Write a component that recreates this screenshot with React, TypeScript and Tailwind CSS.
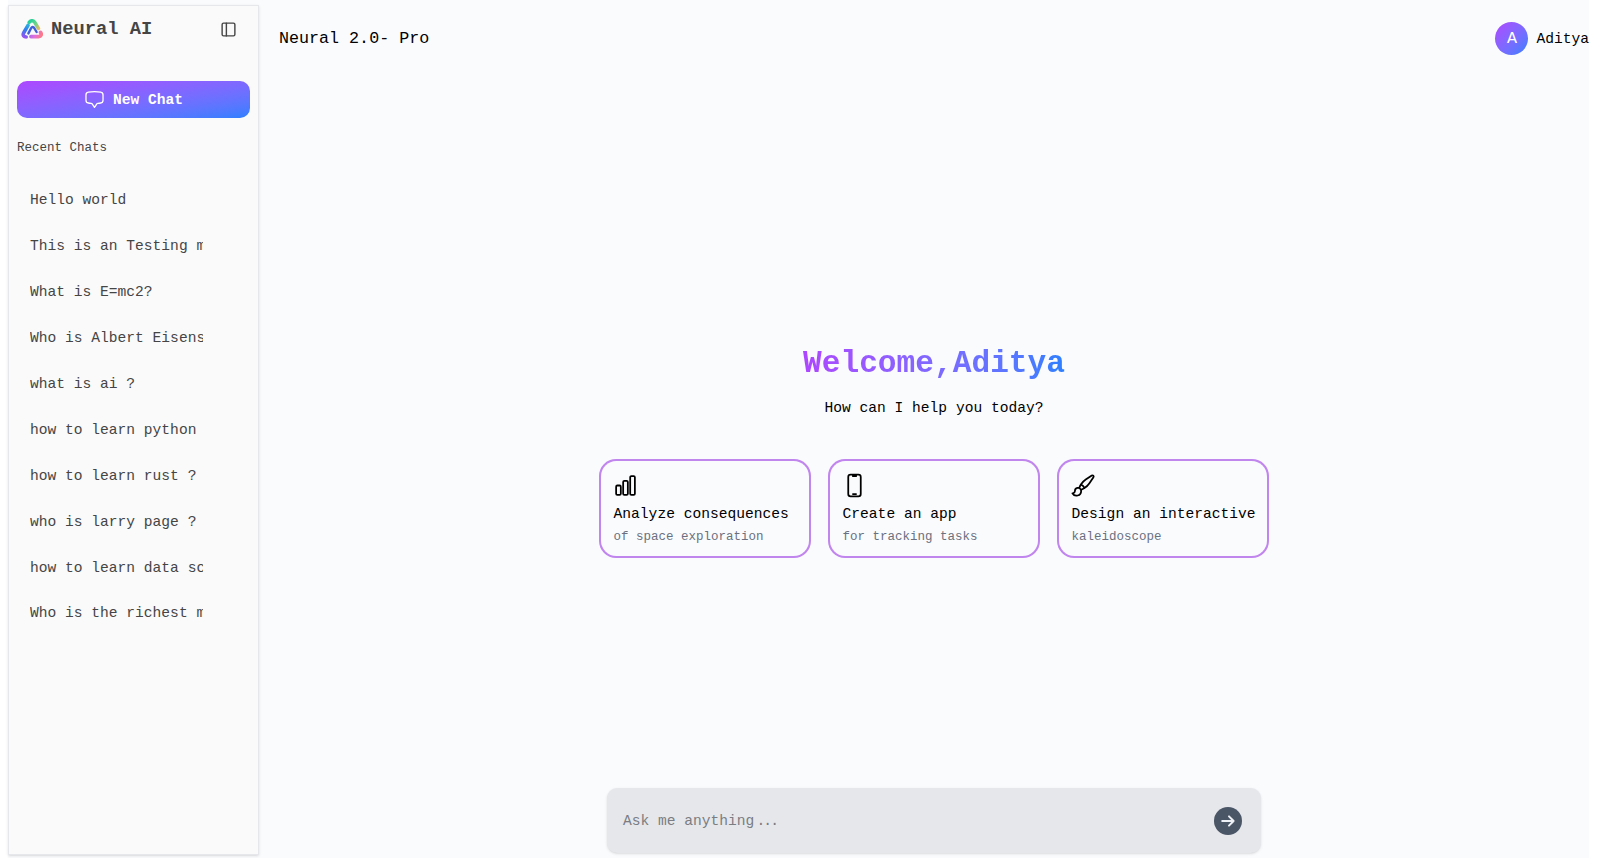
import React from "react";
import { HiOutlineChartBar, HiOutlineDevicePhoneMobile, HiOutlinePaintBrush, HiOutlineChatBubbleBottomCenter } from "react-icons/hi2";
import { PanelLeft } from "lucide-react";

const chats = [
  "Hello world",
  "This is an Testing message",
  "What is E=mc2?",
  "Who is Albert Eisenstein",
  "what is ai ?",
  "how to learn python",
  "how to learn rust ?",
  "who is larry page ?",
  "how to learn data science",
  "Who is the richest man",
];

const cards = [
  { icon: HiOutlineChartBar, title: "Analyze consequences", sub: "of space exploration" },
  { icon: HiOutlineDevicePhoneMobile, title: "Create an app", sub: "for tracking tasks" },
  { icon: HiOutlinePaintBrush, title: "Design an interactive", sub: "kaleidoscope" },
];

function Logo() {
  return (
    <svg viewBox="0 0 22 20" className="h-5 w-[22px] shrink-0" fill="none" strokeLinecap="round" strokeLinejoin="round">
      <defs>
        <linearGradient id="lt" x1="7" y1="3" x2="18" y2="11" gradientUnits="userSpaceOnUse">
          <stop stopColor="#1fcf9c" />
          <stop offset=".5" stopColor="#62d58a" />
          <stop offset="1" stopColor="#f9b65a" />
        </linearGradient>
        <linearGradient id="ll" x1="8" y1="5" x2="3" y2="19" gradientUnits="userSpaceOnUse">
          <stop stopColor="#2bb8d8" />
          <stop offset=".45" stopColor="#2f7df0" />
          <stop offset="1" stopColor="#a04df0" />
        </linearGradient>
        <linearGradient id="lb" x1="10" y1="13" x2="21" y2="17" gradientUnits="userSpaceOnUse">
          <stop stopColor="#b46aea" />
          <stop offset=".4" stopColor="#e070dc" />
          <stop offset="1" stopColor="#ff7a80" />
        </linearGradient>
      </defs>
      <path d="M8.2 3.4C9.6 1.2 12.4 1.2 13.8 3.4L17.4 9.4" stroke="url(#lt)" strokeWidth="3.6" />
      <path d="M7 6.4L2.6 14C1.4 16.4 3 18 5.2 18" stroke="url(#ll)" strokeWidth="3.6" />
      <path d="M10 17.6H17.6C20 17.6 20.8 15.4 19.6 13.4" stroke="url(#lb)" strokeWidth="3.8" />
      <path d="M7.4 14.4L10.2 9C11 7.6 12.4 7.8 13.2 9L15.6 13" stroke="#4060d8" strokeWidth="2.4" />
    </svg>
  );
}

function ArrowIcon() {
  return (
    <svg viewBox="0 0 28 28" className="size-7" fill="none" stroke="currentColor" strokeWidth="2" strokeLinecap="round" strokeLinejoin="round">
      <path d="M8.2 14H19.6M15 9.4L19.6 14L15 18.6" />
    </svg>
  );
}

export default function App() {
  return (
    <div className="flex h-[858px] w-[1600px] overflow-hidden bg-[#fafbfd] font-['Liberation_Mono',monospace] text-[14.6px] text-black">
      <div className="w-2 shrink-0 bg-white" />
      <aside className="mt-[5px] flex h-[850px] w-[251px] shrink-0 flex-col border border-[#e5e7eb] bg-[#fafafa] px-2 text-[#454545] shadow-sm">
        <div className="mt-[7px] flex h-8 items-center pl-1">
          <Logo />
          <span className="ml-2 text-[18.75px] font-bold">Neural AI</span>
          <PanelLeft className="mr-[13px] ml-auto size-[17px]" strokeWidth={2} />
        </div>
        <button className="mt-9 flex h-[37px] shrink-0 items-center justify-center gap-2 rounded-[10px] bg-linear-to-br from-[#ad46ff] to-[#2b7fff] font-bold text-white">
          <HiOutlineChatBubbleBottomCenter className="size-[21px]" />
          <span className="pt-[3px]">New Chat</span>
        </button>
        <div className="mt-[22px] h-[17px] text-[12.5px] leading-[17px]">Recent Chats</div>
        <ul className="mt-[21.4px]">
          {chats.map((c) => (
            <li key={c} className="flex h-[45.9px] items-center pl-[13px]">
              <span className="w-[173px] overflow-hidden whitespace-nowrap">{c}</span>
            </li>
          ))}
        </ul>
      </aside>
      <main className="flex min-w-0 flex-1 flex-col">
        <header className="flex h-[77px] shrink-0 items-center justify-between pl-5">
          <span className="pt-px text-[16.7px]">Neural 2.0- Pro</span>
          <div className="flex items-center gap-2">
            <span className="flex size-[33px] items-center justify-center rounded-full bg-linear-to-br from-[#ad46ff] to-[#2b7fff] text-[16.7px] text-white">A</span>
            <span className="pt-[2px]">Aditya</span>
          </div>
        </header>
        <section className="flex flex-1 flex-col items-center pt-[267px] pl-5">
          <h1 className="bg-linear-to-r from-[#ad46ff] to-[#2b7fff] bg-clip-text text-[31.2px] leading-10 font-bold text-transparent">Welcome,Aditya</h1>
          <p className="mt-[14px] leading-5">How can I help you today?</p>
          <div className="mt-[41px] flex gap-[17px]">
            {cards.map(({ icon: Icon, title, sub }) => (
              <div key={title} className="h-[99px] w-[212px] rounded-[17px] bg-[#c185ee] p-[1.6px]">
                <div className="flex h-full flex-col rounded-[15.4px] bg-[#fafbfd] px-[13px] pt-[12px]">
                  <Icon className="-ml-px size-[25px] shrink-0" strokeWidth={1.7} />
                  <span className="mt-[5px] leading-[22px] whitespace-nowrap">{title}</span>
                  <span className="pt-px text-[12.5px] leading-[22px] text-[#6a7080]">{sub}</span>
                </div>
              </div>
            ))}
          </div>
        </section>
        <div className="mr-[-10px] mb-[5px] ml-[10px] flex h-[65px] w-[654px] shrink-0 items-center justify-between self-center rounded-[10px] bg-[#e5e7eb] pr-[19px] pl-4 shadow-sm">
          <span className="pt-[3px] text-[#7b7d82]">
            Ask me anything<span className="ml-[2px] tracking-[-1.8px]">...</span>
          </span>
          <span className="flex size-7 items-center justify-center rounded-full bg-[#4a5565] text-[#eef2f7]">
            <ArrowIcon />
          </span>
        </div>
      </main>
      <div className="w-[11px] shrink-0 bg-white" />
    </div>
  );
}
